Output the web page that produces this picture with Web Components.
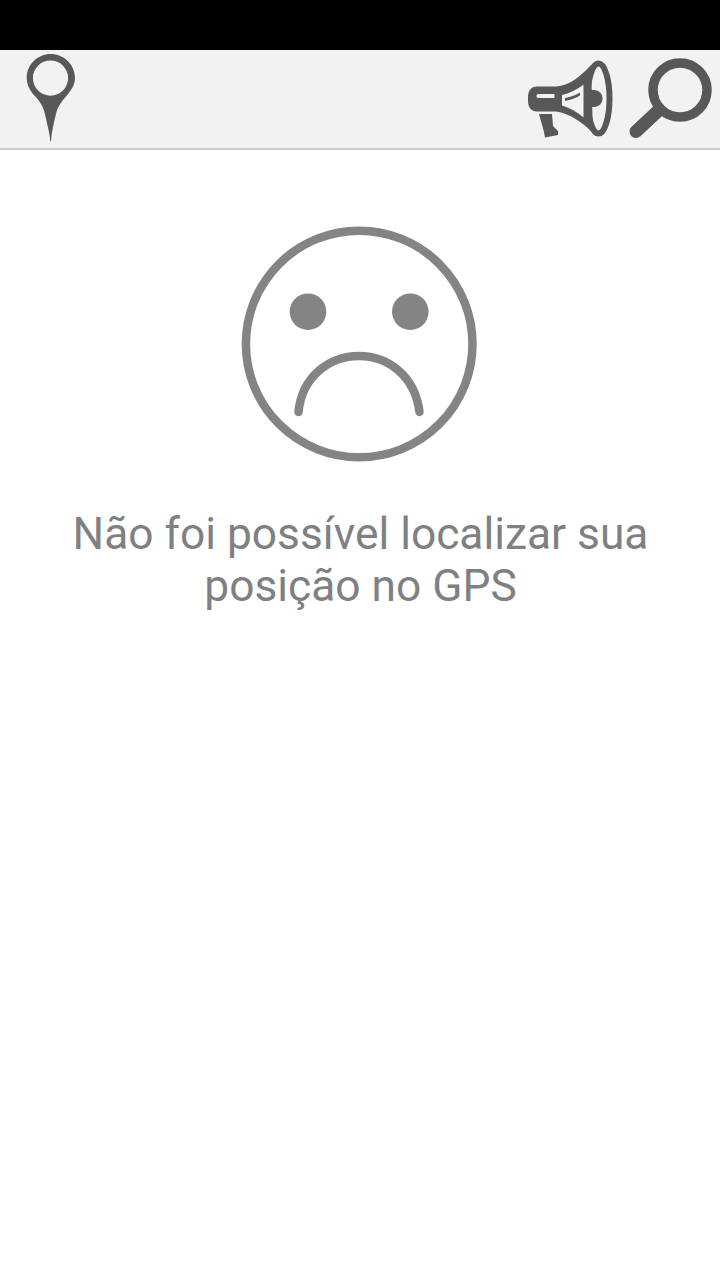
<!DOCTYPE html>
<html>
<head>
<meta charset="utf-8">
<style>
  html, body { margin: 0; padding: 0; background: #fff; }
  body { width: 720px; height: 1280px; display: flex; flex-direction: column; }
</style>
</head>
<body>
<status-strip></status-strip>
<top-bar>
  <pin-icon slot="start"></pin-icon>
  <megaphone-icon slot="end"></megaphone-icon>
  <search-icon slot="end"></search-icon>
</top-bar>
<empty-state>Não foi possível localizar sua posição no GPS</empty-state>

<script>
class StatusStrip extends HTMLElement {
  connectedCallback() {
    this.attachShadow({ mode: 'open' });
    this.shadowRoot.innerHTML = `
      <style>
        :host { display: block; height: 50px; background: #000; }
      </style>
    `;
  }
}

class TopBar extends HTMLElement {
  connectedCallback() {
    this.attachShadow({ mode: 'open' });
    this.shadowRoot.innerHTML = `
      <style>
        :host {
          display: flex;
          justify-content: space-between;
          height: 98px;
          background: #f2f2f2;
          border-bottom: 2px solid #cdcdcd;
        }
        .group { display: flex; }
      </style>
      <div class="group"><slot name="start"></slot></div>
      <div class="group"><slot name="end"></slot></div>
    `;
  }
}

class PinIcon extends HTMLElement {
  connectedCallback() {
    this.attachShadow({ mode: 'open' });
    this.shadowRoot.innerHTML = `
      <style>
        :host { display: block; width: 100px; height: 98px; }
        svg { display: block; }
      </style>
      <svg width="100" height="98" viewBox="0 50 100 98">
        <path fill="#58585a" fill-rule="evenodd" d="M50.700 54C37.400 54 26.700 64.700 26.700 78C26.700 84 29 89 33 94C38 99 43 105 45 114C47 124 49.500 132 50.400 141.500H51C51.500 132 54 122 56 114C57.500 106 63 100 68 94C72 89 75 84 75 78C75 64.700 64 54 50.700 54ZM50.500 60.500A17.600 17.600 0 1 1 50.500 95.700A17.600 17.600 0 1 1 50.500 60.500Z"/>
      </svg>
    `;
  }
}

class MegaphoneIcon extends HTMLElement {
  connectedCallback() {
    this.attachShadow({ mode: 'open' });
    this.shadowRoot.innerHTML = `
      <style>
        :host { display: block; width: 100px; height: 98px; }
        svg { display: block; }
      </style>
      <svg width="100" height="98" viewBox="520 50 100 98">
        <g fill="#58585a">
          <path d="M537 86.500H556C570 85.500 581 76 591 65L593 133C582 122 570 113.500 556 111.500H537C531 111.500 528 107 528 101V97C528 91 531 86.500 537 86.500Z"/>
          <path d="M539 114H552L553 126L558 131V135L545 137.500C544 130 541 122 539 114Z"/>
          <path d="M590 90H594C599 90 602.500 94 602.500 98.500C602.500 103 599 107 594 107H590Z"/>
        </g>
        <path fill="#f2f2f2" d="M538 94H554.500V98H538C537 98 536.500 97 536.500 96C536.500 95 537 94 538 94Z"/>
        <path fill="#f2f2f2" d="M562 95C570 93 578 89 583.500 84.500V117.500C578 112.500 570 108 562 105.500Z"/>
        <path fill="#58585a" d="M565 98C571 97 576 95 580 92.500V95.500C576 98 571 100 565 101Z"/>
        <ellipse cx="598.500" cy="98.500" rx="11" ry="35" fill="none" stroke="#58585a" stroke-width="6"/>
      </svg>
    `;
  }
}

class SearchIcon extends HTMLElement {
  connectedCallback() {
    this.attachShadow({ mode: 'open' });
    this.shadowRoot.innerHTML = `
      <style>
        :host { display: block; width: 100px; height: 98px; }
        svg { display: block; }
      </style>
      <svg width="100" height="98" viewBox="620 50 100 98">
        <circle cx="680" cy="90" r="27" fill="none" stroke="#58585a" stroke-width="9.500"/>
        <path d="M659 110L636 131.500" fill="none" stroke="#58585a" stroke-width="13" stroke-linecap="round"/>
      </svg>
    `;
  }
}

class EmptyState extends HTMLElement {
  connectedCallback() {
    this.attachShadow({ mode: 'open' });
    this.shadowRoot.innerHTML = `
      <style>
        :host {
          display: flex;
          flex-direction: column;
          align-items: center;
          padding-top: 74px;
          font-family: Roboto, sans-serif;
          font-size: 44.3px;
          line-height: 52px;
          color: #7f8082;
          text-align: center;
        }
        svg { display: block; margin-bottom: 44px; }
        p { margin: 0; width: 620px; padding-left: 1px; }
      </style>
      <svg width="240" height="240" viewBox="240 224 240 240">
        <circle cx="359.200" cy="344" r="113.300" fill="none" stroke="#838486" stroke-width="8.500"/>
        <circle cx="308" cy="311.700" r="18.300" fill="#838486"/>
        <circle cx="410.300" cy="311.700" r="18.300" fill="#838486"/>
        <path d="M298.500 412C302 376 330 356 359 356C388 356 415 376 419.500 412" fill="none" stroke="#838486" stroke-width="8.500" stroke-linecap="round"/>
      </svg>
      <p><slot></slot></p>
    `;
  }
}

customElements.define('status-strip', StatusStrip);
customElements.define('top-bar', TopBar);
customElements.define('pin-icon', PinIcon);
customElements.define('megaphone-icon', MegaphoneIcon);
customElements.define('search-icon', SearchIcon);
customElements.define('empty-state', EmptyState);
</script>
</body>
</html>
